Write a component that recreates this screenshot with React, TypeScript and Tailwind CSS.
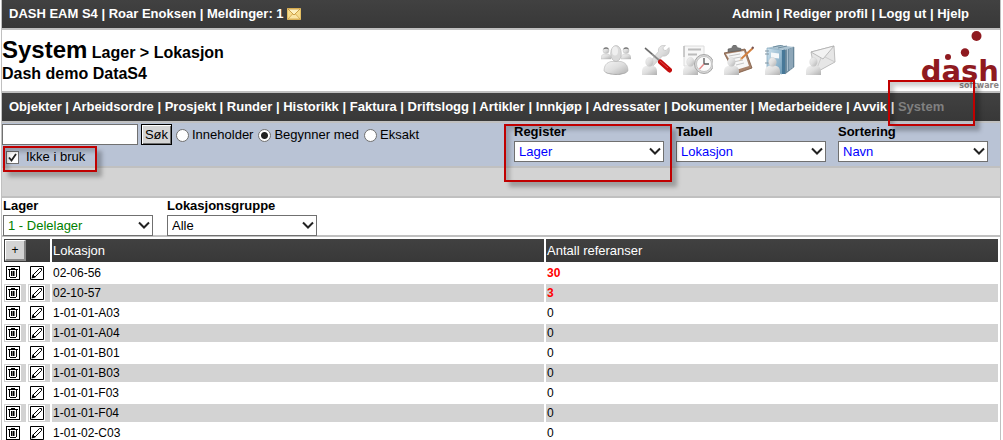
import { Fragment, type ReactNode } from "react";

const navItems = [
  "Objekter", "Arbeidsordre", "Prosjekt", "Runder", "Historikk", "Faktura", "Driftslogg",
  "Artikler", "Innkjøp", "Adressater", "Dokumenter", "Medarbeidere", "Avvik",
];
const userItems = ["Admin", "Rediger profil", "Logg ut", "Hjelp"];

const rows = [
  { name: "02-06-56", refs: 30 },
  { name: "02-10-57", refs: 3 },
  { name: "1-01-01-A03", refs: 0 },
  { name: "1-01-01-A04", refs: 0 },
  { name: "1-01-01-B01", refs: 0 },
  { name: "1-01-01-B03", refs: 0 },
  { name: "1-01-01-F03", refs: 0 },
  { name: "1-01-01-F04", refs: 0 },
  { name: "1-01-02-C03", refs: 0 },
];

function Highlight({ className }: { className: string }) {
  return (
    <span
      aria-hidden="true"
      className={`pointer-events-none absolute z-10 border-2 border-[#c00000] shadow-[5px_5px_4px_rgba(0,0,0,0.25),inset_4px_4px_4px_rgba(0,0,0,0.2)] ${className}`}
    />
  );
}

function Select({ id, label, value, color }: { id: string; label: string; value: string; color: string }) {
  return (
    <div className="w-[150px]">
      <label htmlFor={id} className="block font-bold leading-4">{label}</label>
      <div className="relative mt-px">
        <select
          id={id}
          className={`block h-[21px] w-full appearance-none border border-[#707070] bg-white pl-1 leading-4 ${color}`}
        >
          <option>{value}</option>
        </select>
        <svg className="pointer-events-none absolute right-[3px] top-[6px]" width="12" height="9" viewBox="0 0 12 9" fill="none" stroke="#222" strokeWidth="2">
          <path d="M1 1.500 6 6.500 11 1.500" />
        </svg>
      </div>
    </div>
  );
}

function Radio({ label, checked }: { label: string; checked?: boolean }) {
  return (
    <label className="flex items-center gap-[3px]">
      <input
        type="radio"
        name="match"
        defaultChecked={checked}
        className="size-[13px] appearance-none rounded-full border border-[#707070] bg-white checked:bg-[radial-gradient(circle,#222_3px,#fff_4px)]"
      />
      {label}
    </label>
  );
}

function Defs() {
  return (
    <svg width="0" height="0" className="absolute" aria-hidden="true">
      <defs>
        <linearGradient id="silver" x1="0" y1="0" x2="1" y2="1">
          <stop offset="0" stopColor="#f4f4f4" />
          <stop offset="0.5" stopColor="#dedede" />
          <stop offset="1" stopColor="#b0b0b0" />
        </linearGradient>
        <linearGradient id="book" x1="0" y1="0" x2="1" y2="1">
          <stop offset="0" stopColor="#cfe3ef" />
          <stop offset="1" stopColor="#6f9dba" />
        </linearGradient>
      </defs>
    </svg>
  );
}

function Person() {
  return (
    <g fill="url(#silver)">
      <path d="M0 30v-4c0-3 2-5 5-5.500h5c3 .5 5 2.500 5 5.500v4z" />
      <ellipse cx="7.500" cy="17" rx="3.800" ry="4.600" stroke="#cfcfcf" strokeWidth=".4" />
    </g>
  );
}

function ToolIcon({ label, children }: { label: string; children: ReactNode }) {
  return (
    <a href="#" aria-label={label} className="block">
      <svg width="30" height="30" viewBox="0 0 30 30">{children}</svg>
    </a>
  );
}

function Toolbar() {
  return (
    <div className="flex gap-[11px]">
      <ToolIcon label="Medarbeidere">
        <g fill="url(#silver)" stroke="#b9b9b9" strokeWidth=".4">
          <path d="M0 14c0-3 1-4.500 3-5h4c2 .5 3 2 3 5z" />
          <circle cx="5" cy="5.500" r="3" />
          <path d="M20 14c0-3 1-4.500 3-5h4c2 .5 3 2 3 5z" />
          <circle cx="25" cy="5.500" r="3" />
        </g>
        <path d="M2.300 4.500c.5-3 5-3 5.500 0-1.500-1-4-1-5.500 0zM22.300 4.500c.5-3 5-3 5.500 0-1.500-1-4-1-5.500 0z" fill="#777" />
        <path d="M3 26c0-6 3-8.500 7-9.500h10c4 1 7 3.500 7 9.500-4 4.500-20 4.500-24 0z" fill="url(#silver)" stroke="#aaa" strokeWidth=".5" />
        <path d="M4 27c5 3 17 3 22 0-3 3.500-19 3.500-22 0z" fill="#8a8a8a" />
        <ellipse cx="15" cy="8.500" rx="5.300" ry="8" fill="#dadada" stroke="#b0b0b0" strokeWidth=".6" />
        <ellipse cx="14" cy="6" rx="3" ry="4.500" fill="#efefef" />
      </ToolIcon>
      <ToolIcon label="Arbeidsordre">
        <path d="M27 2.500 24 5.500 21.500 5 21 2.500 23.500.5c-4-1-8 2-7 6L7 18l4 3L20.500 11c5 1 8-3.500 6.500-8.500z" fill="url(#silver)" stroke="#b5b5b5" strokeWidth=".5" />
        <path d="M3 3 18 16" stroke="#8c8c8c" strokeWidth="1.800" />
        <path d="M3 3 10 9" stroke="#555" strokeWidth=".8" />
        <path d="M18.500 17 27.500 25" stroke="#c40d0d" strokeWidth="5" strokeLinecap="round" />
        <path d="M18 16 26 23" stroke="#e04a4a" strokeWidth="1" />
        <Person />
      </ToolIcon>
      <ToolIcon label="Timer">
        <path d="M1 1h20v20H1z" fill="#f7f7f7" stroke="#dcdcdc" />
        <path d="M5 4.500h13M5 9.500h9" stroke="#bcbcbc" strokeWidth="2" />
        <path d="M1 1v11" stroke="#aaa" />
        <Person />
        <circle cx="21" cy="19" r="9.500" fill="#d8d8d8" stroke="#a7a7a7" />
        <circle cx="21" cy="19" r="7.500" fill="#fbfbfb" stroke="#b8b8b8" strokeWidth=".7" />
        <path d="M21 13v6h5" fill="none" stroke="#555" strokeWidth="1.300" />
        <path d="m21 19-4.500 5" stroke="#e58787" strokeWidth="1.300" />
      </ToolIcon>
      <ToolIcon label="Registrering">
        <path d="M0 8 21 4l7 19-17 6z" fill="#a9846c" stroke="#79563f" strokeWidth=".8" />
        <path d="M2 9 20 6l5 15-13 4z" fill="#f7f7f7" />
        <path d="m5 11 11-2M6 14l11-2M9 17l10-2M12 20l8-2" stroke="#c5c5c5" />
        <path d="M4 7V4l4-1c0-4 5-4 5-.5l4 1v2z" fill="#777" stroke="#555" strokeWidth=".5" />
        <path d="M29 3 17 14" stroke="#d3813f" strokeWidth="2" />
        <path d="m17 13-2 3 3-1.500z" fill="#e9c79d" />
        <path d="m29.500 2-1.500 1.500" stroke="#755" strokeWidth="2" />
        <Person />
      </ToolIcon>
      <ToolIcon label="Dokumenter">
        <path d="m20 4 9-2v20l-9 7z" fill="#6f8da1" stroke="#4f6c80" strokeWidth=".5" />
        <path d="M22.500 4v22M25 3.500v21M27 3v20" stroke="#c5d7e2" strokeWidth=".7" />
        <path d="m2 3 12-3 15 2-9 3z" fill="#adc4d2" />
        <path d="m8 2 10-2M13 3l9-2" stroke="#5d7d91" strokeWidth=".8" />
        <path d="m2 3 15 2v24L2 26z" fill="url(#book)" stroke="#7ea3ba" strokeWidth=".7" />
        <path d="M17 5l3-.5V29h-3z" fill="#477898" />
        <path d="M6 7.500l8 1v5l-8-1z" fill="#f5f8fa" />
        <path d="M0 6h4M0 9h4M0 18h4" stroke="#8195a2" />
        <Person />
      </ToolIcon>
      <ToolIcon label="Meldinger">
        <path d="M5 7 28 1l1 16-20 11z" fill="#e6e6e6" stroke="#b0b0b0" strokeWidth=".8" />
        <path d="M5 7 17 14 28 1z" fill="#f2f2f2" stroke="#adadad" strokeWidth=".8" />
        <path d="m9 28 6-15M29 17l-10-5" stroke="#c4c4c4" strokeWidth=".8" />
        <Person />
      </ToolIcon>
    </div>
  );
}

function Logo() {
  return (
    <div className="flex h-[61px] w-[84px] flex-col items-end pr-px">
      <svg width="84" height="32" viewBox="0 0 84 32" className="-mb-[2px] block shrink-0" fill="#8f1a20">
        <circle cx="61.500" cy="6" r="5" />
        <circle cx="50" cy="22.500" r="4.200" />
        <circle cx="33" cy="27" r="3" />
      </svg>
      <span className="font-['DejaVu_Sans',sans-serif] text-[29px] font-bold leading-[22px] text-[#8f1a20]">dash</span>
      <span className="font-['DejaVu_Sans',sans-serif] text-[8px] font-bold leading-[8px] text-[#8a8585]">software</span>
    </div>
  );
}

function TrashIcon() {
  return (
    <svg className="block" width="16" height="16" viewBox="0 0 16 16" shapeRendering="crispEdges">
      <path fill="#fff" d="M0 0h16v16H0z" />
      <path fill="#000" fillRule="evenodd" d="M1 1h14v14H1zM2 2v12h12V2z" />
      <path fill="#000" d="M6 3h4v1H6zM3 4h10v1H3zM4 5h1v7H4zM11 5h1v7h-1zM5 12h6v1H5zM6 6h1v5H6zM8 6h1v5H8z" />
      <path fill="#777" d="M7 6h1v5H7zM9 6h1v5H9z" />
    </svg>
  );
}

function PencilIcon() {
  return (
    <svg className="block" width="16" height="16" viewBox="0 0 16 16">
      <path fill="#fff" d="M0 0h16v16H0z" />
      <path fill="none" stroke="#000" d="M1.500 1.500h13v13h-13z" />
      <path fill="#fff" stroke="#000" d="m4 10 6.500-6.500h2V5.500L6 12z" />
      <path d="M2.500 13.500 3.500 9.500 6.500 12.500z" fill="#000" />
    </svg>
  );
}

const bar = "bg-linear-to-b from-[#414141] to-[#383838]";

export default function App() {
  return (
    <div className="h-screen overflow-hidden bg-white font-['Liberation_Sans',Arial,sans-serif] text-[13px] text-black">
      <Defs />
      <div className="ml-px mr-[2px] min-h-full border-x border-[#c0c0c0]">
        <div className={`flex h-[30px] items-center justify-between border-b-2 border-[#c0c0c0] pl-[7px] pr-[31px] font-bold text-white ${bar}`}>
          <div className="flex items-center gap-[3px]">
            <span>DASH EAM S4 | Roar Enoksen | Meldinger: 1</span>
            <svg width="14" height="12" viewBox="0 0 14 12">
              <path d="M.5.500h13v11H.5z" fill="#f7dc8c" stroke="#e3bd62" />
              <path d="m1 11 4.500-5h3L13 11z" fill="#fbe6a4" stroke="#c99a3f" strokeWidth=".7" />
              <path d="m1 1 6 6 6-6z" fill="#fdf0c0" stroke="#c08e30" strokeWidth=".8" />
            </svg>
          </div>
          <div>
            {userItems.map((item, i) => (
              <Fragment key={item}>
                {i > 0 && " | "}
                <a href="#">{item}</a>
              </Fragment>
            ))}
          </div>
        </div>

        <header className="flex h-[63px] border-b-2 border-[#c0c0c0]">
          <div className="pt-[7px] text-[16px] font-bold">
            <h1 className="leading-[26px]"><span className="text-[24px]">System</span> Lager &gt; Lokasjon</h1>
            <div className="leading-4">Dash demo DataS4</div>
          </div>
          <div className="ml-auto flex gap-20">
            <div className="pt-[15px]"><Toolbar /></div>
            <Logo />
          </div>
        </header>

        <nav className={`h-[30px] whitespace-nowrap border-b-2 border-[#c0c0c0] pl-[7px] font-bold leading-7 text-white ${bar}`}>
          {navItems.map((item) => (
            <Fragment key={item}>
              <a href="#">{item}</a>{" | "}
            </Fragment>
          ))}
          <span className="relative inline-block text-[#808080]">
            <a href="#">System</a>
            <Highlight className="-left-[10px] -right-[31px] -top-[13px] h-[46px]" />
          </span>
        </nav>

        <section className="flex h-[45px] border-b-2 border-[#c0c0c0] bg-[#b9c3d5]">
          <form className="pt-px" onSubmit={(e) => e.preventDefault()}>
            <div className="flex items-center">
              <input aria-label="Søk" className="h-[21px] w-[136px] border border-[#707070] bg-white px-1" />
              <button className="ml-[3px] h-[21px] w-[31px] border border-black bg-[#d4d4d4] leading-4 shadow-[inset_1px_1px_0_#fff,inset_-1px_-1px_0_#707070]">Søk</button>
              <div className="ml-1 flex gap-[5px] pt-px">
                <Radio label="Inneholder" />
                <Radio label="Begynner med" checked />
                <Radio label="Eksakt" />
              </div>
            </div>
            <div className="relative ml-px mt-px h-[22px] w-[94px]">
              <label className="flex h-full items-center gap-[7px] pl-[3px]">
                <span className="relative size-[13px]">
                  <input type="checkbox" defaultChecked className="peer block size-[13px] appearance-none border border-[#707070] bg-white" />
                  <svg className="pointer-events-none absolute left-0 top-0 hidden peer-checked:block" width="13" height="13" viewBox="0 0 13 13" fill="none" stroke="#222" strokeWidth="1.800">
                    <path d="m3 6.500 2.500 3L10 3" />
                  </svg>
                </span>
                Ikke i bruk
              </label>
              <Highlight className="inset-x-0 top-0 h-[26px]" />
            </div>
          </form>
          <div className="ml-auto flex gap-3 pr-3 pt-px">
            <div className="relative">
              <Select id="register" label="Register" value="Lager" color="text-[#0000ff]" />
              <Highlight className="-left-[10px] -right-[8px] top-0 h-[58px]" />
            </div>
            <Select id="tabell" label="Tabell" value="Lokasjon" color="text-[#0000ff]" />
            <Select id="sortering" label="Sortering" value="Navn" color="text-[#0000ff]" />
          </div>
        </section>

        <div className="h-[30px] border-b-2 border-[#c0c0c0] bg-[#d3d3d3]" />

        <section className="flex h-[39px] gap-[14px] border-b-2 border-[#c0c0c0] pl-px">
          <Select id="lager" label="Lager" value="1 - Delelager" color="text-[#008000]" />
          <Select id="gruppe" label="Lokasjonsgruppe" value="Alle" color="text-black" />
        </section>

        <table className="w-full table-fixed border-separate border-spacing-[2px] text-[12px]">
          <colgroup>
            <col className="w-[22px]" />
            <col className="w-[22px]" />
            <col className="w-[492px]" />
            <col />
          </colgroup>
          <thead>
            <tr className="h-[23px] text-left text-[13px] text-white">
              <th colSpan={2} className={`p-0 pl-px ${bar}`}>
                <button aria-label="Ny lokasjon" className="block h-[21px] w-[21px] border-t border-l border-r-2 border-b-2 border-t-white border-l-white border-r-[#888] border-b-[#888] bg-[#d4d4d4] text-[12px] font-normal leading-4 text-black">+</button>
              </th>
              <th className={`p-0 pl-px font-normal ${bar}`}>Lokasjon</th>
              <th className={`p-0 pl-px font-normal ${bar}`}>Antall referanser</th>
            </tr>
          </thead>
          <tbody>
            {rows.map((row) => (
              <tr key={row.name} className="h-[18px] leading-[18px] *:p-0 even:*:bg-[#d3d3d3]">
                <td><button aria-label={`Slett ${row.name}`} className="ml-px block"><TrashIcon /></button></td>
                <td><button aria-label={`Rediger ${row.name}`} className="ml-px block"><PencilIcon /></button></td>
                <td><div className="pl-px">{row.name}</div></td>
                <td>
                  <div className={row.refs > 0 ? "pl-px font-bold text-[#ff0000]" : "pl-px"}>{row.refs}</div>
                </td>
              </tr>
            ))}
          </tbody>
        </table>
      </div>
    </div>
  );
}
